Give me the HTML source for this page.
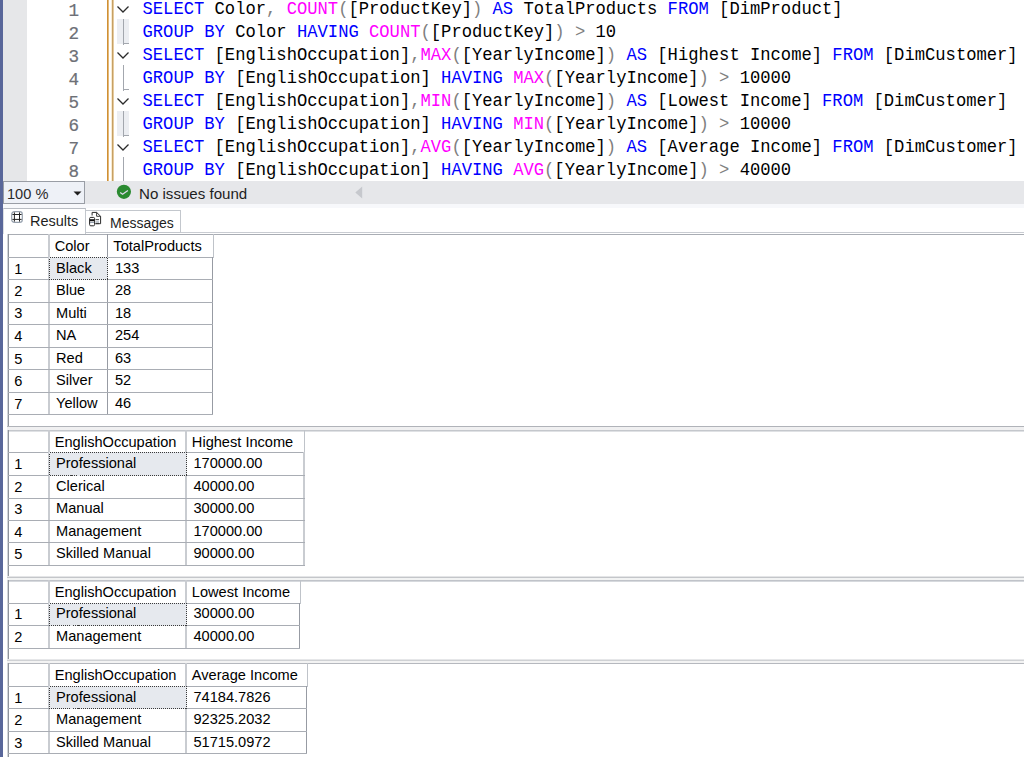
<!DOCTYPE html><html><head><meta charset="utf-8"><style>
html,body{margin:0;padding:0;width:1024px;height:757px;overflow:hidden;background:#fff;position:relative}
div,span{box-sizing:border-box}
.a{position:absolute}
.code{position:absolute;left:142.5px;font-family:"Liberation Mono",monospace;font-size:17.17px;white-space:pre;line-height:23px;height:23px;transform:scaleY(1.06);transform-origin:0 17px}
.ln{position:absolute;left:40px;width:39px;text-align:right;font-family:"Liberation Mono",monospace;font-size:17.6px;color:#6d7076;line-height:23px;height:23px;-webkit-text-stroke:0.2px currentColor;transform:scaleY(1.05);transform-origin:0 17px}
.ui{font-family:"Liberation Sans",sans-serif;color:#1e1e1e;white-space:pre}
.g{font-family:"Liberation Sans",sans-serif;font-size:14.6px;color:#000;white-space:pre;position:absolute;line-height:16px}
.hl{position:absolute;height:1px;background:#a9adb4}
.vl{position:absolute;width:1px;background:#a9adb4}
</style></head><body>

<div class="a" style="left:3px;top:0;width:24px;height:181px;background:#e6e7e9"></div>
<div class="ln" style="top:0.4px">1</div>
<div class="code" style="top:-2.5px"><span style="color:#0000ff">SELECT</span><span style="color:#000000"> Color</span><span style="color:#808080">,</span><span style="color:#000000"> </span><span style="color:#ff00ff">COUNT</span><span style="color:#808080">(</span><span style="color:#000000">[ProductKey]</span><span style="color:#808080">)</span><span style="color:#0000ff"> AS</span><span style="color:#000000"> TotalProducts</span><span style="color:#0000ff"> FROM</span><span style="color:#000000"> [DimProduct]</span></div>
<div class="ln" style="top:23.4px">2</div>
<div class="code" style="top:20.5px"><span style="color:#0000ff">GROUP BY</span><span style="color:#000000"> Color </span><span style="color:#0000ff">HAVING</span><span style="color:#000000"> </span><span style="color:#ff00ff">COUNT</span><span style="color:#808080">(</span><span style="color:#000000">[ProductKey]</span><span style="color:#808080">)</span><span style="color:#808080"> &gt; </span><span style="color:#000000">10</span></div>
<div class="ln" style="top:46.4px">3</div>
<div class="code" style="top:43.5px"><span style="color:#0000ff">SELECT</span><span style="color:#000000"> [EnglishOccupation]</span><span style="color:#808080">,</span><span style="color:#ff00ff">MAX</span><span style="color:#808080">(</span><span style="color:#000000">[YearlyIncome]</span><span style="color:#808080">)</span><span style="color:#0000ff"> AS </span><span style="color:#000000">[Highest Income]</span><span style="color:#0000ff"> FROM </span><span style="color:#000000">[DimCustomer]</span></div>
<div class="ln" style="top:69.4px">4</div>
<div class="code" style="top:66.5px"><span style="color:#0000ff">GROUP BY</span><span style="color:#000000"> [EnglishOccupation] </span><span style="color:#0000ff">HAVING</span><span style="color:#000000"> </span><span style="color:#ff00ff">MAX</span><span style="color:#808080">(</span><span style="color:#000000">[YearlyIncome]</span><span style="color:#808080">)</span><span style="color:#808080"> &gt; </span><span style="color:#000000">10000</span></div>
<div class="ln" style="top:92.4px">5</div>
<div class="code" style="top:89.5px"><span style="color:#0000ff">SELECT</span><span style="color:#000000"> [EnglishOccupation]</span><span style="color:#808080">,</span><span style="color:#ff00ff">MIN</span><span style="color:#808080">(</span><span style="color:#000000">[YearlyIncome]</span><span style="color:#808080">)</span><span style="color:#0000ff"> AS </span><span style="color:#000000">[Lowest Income]</span><span style="color:#0000ff"> FROM </span><span style="color:#000000">[DimCustomer]</span></div>
<div class="ln" style="top:115.4px">6</div>
<div class="code" style="top:112.5px"><span style="color:#0000ff">GROUP BY</span><span style="color:#000000"> [EnglishOccupation] </span><span style="color:#0000ff">HAVING</span><span style="color:#000000"> </span><span style="color:#ff00ff">MIN</span><span style="color:#808080">(</span><span style="color:#000000">[YearlyIncome]</span><span style="color:#808080">)</span><span style="color:#808080"> &gt; </span><span style="color:#000000">10000</span></div>
<div class="ln" style="top:138.4px">7</div>
<div class="code" style="top:135.5px"><span style="color:#0000ff">SELECT</span><span style="color:#000000"> [EnglishOccupation]</span><span style="color:#808080">,</span><span style="color:#ff00ff">AVG</span><span style="color:#808080">(</span><span style="color:#000000">[YearlyIncome]</span><span style="color:#808080">)</span><span style="color:#0000ff"> AS </span><span style="color:#000000">[Average Income]</span><span style="color:#0000ff"> FROM </span><span style="color:#000000">[DimCustomer]</span></div>
<div class="ln" style="top:161.4px">8</div>
<div class="code" style="top:158.5px"><span style="color:#0000ff">GROUP BY</span><span style="color:#000000"> [EnglishOccupation] </span><span style="color:#0000ff">HAVING</span><span style="color:#000000"> </span><span style="color:#ff00ff">AVG</span><span style="color:#808080">(</span><span style="color:#000000">[YearlyIncome]</span><span style="color:#808080">)</span><span style="color:#808080"> &gt; </span><span style="color:#000000">40000</span></div>
<div class="a" style="left:107px;top:0;width:1px;height:181px;background:#cf9036"></div><div class="a" style="left:108px;top:0;width:1px;height:181px;background:#e4b978"></div>
<div class="a" style="left:111px;top:0;width:1px;height:181px;background:#f8ead0"></div><div class="a" style="left:112px;top:0;width:1px;height:181px;background:#c6a064"></div><div class="a" style="left:113px;top:0;width:1px;height:181px;background:#e6cb9e"></div>
<svg class="a" style="left:116px;top:4px" width="14" height="10" viewBox="0 0 14 10"><path d="M1.5 2.5 L7 8 L12.5 2.5" fill="none" stroke="#2b2b2b" stroke-width="1.3"/></svg>
<div class="a" style="left:117px;top:19px;width:12px;height:25px;background:#eceef2"></div>
<div class="a" style="left:123px;top:19px;width:1px;height:26px;background:#a3a7ae"></div>
<div class="a" style="left:123px;top:43px;width:6px;height:1px;background:#a3a7ae"></div>
<svg class="a" style="left:116px;top:50px" width="14" height="10" viewBox="0 0 14 10"><path d="M1.5 2.5 L7 8 L12.5 2.5" fill="none" stroke="#2b2b2b" stroke-width="1.3"/></svg>
<div class="a" style="left:123px;top:65px;width:1px;height:26px;background:#a3a7ae"></div>
<div class="a" style="left:123px;top:89px;width:6px;height:1px;background:#a3a7ae"></div>
<svg class="a" style="left:116px;top:96px" width="14" height="10" viewBox="0 0 14 10"><path d="M1.5 2.5 L7 8 L12.5 2.5" fill="none" stroke="#2b2b2b" stroke-width="1.3"/></svg>
<div class="a" style="left:117px;top:111px;width:12px;height:25px;background:#eceef2"></div>
<div class="a" style="left:123px;top:111px;width:1px;height:26px;background:#a3a7ae"></div>
<div class="a" style="left:123px;top:135px;width:6px;height:1px;background:#a3a7ae"></div>
<svg class="a" style="left:116px;top:142px" width="14" height="10" viewBox="0 0 14 10"><path d="M1.5 2.5 L7 8 L12.5 2.5" fill="none" stroke="#2b2b2b" stroke-width="1.3"/></svg>
<div class="a" style="left:123px;top:157px;width:1px;height:25px;background:#a3a7ae"></div>
<div class="a" style="left:3px;top:181px;width:1021px;height:23px;background:#e6e7ea"></div>
<div class="a" style="left:3px;top:181px;width:82px;height:23px;background:#eef1f7;border:1px solid #999da5"></div>
<div class="a ui" style="left:7px;top:185.5px;font-size:14.6px;line-height:17px;color:#2a2a2a">100 %</div>
<svg class="a" style="left:73px;top:191px" width="9" height="5" viewBox="0 0 9 5"><path d="M0.5 0.5 L8.5 0.5 L4.5 4.5 Z" fill="#1e1e1e"/></svg>
<svg class="a" style="left:116px;top:184px" width="16" height="16" viewBox="0 0 16 16"><circle cx="7.9" cy="7.85" r="7.1" fill="#2a8a30"/><path d="M4.2 8.4 L6.6 10.3 L11.9 6.4" fill="none" stroke="#dcd8ea" stroke-width="1.3"/></svg>
<div class="a ui" style="left:139px;top:184.8px;font-size:15.1px;line-height:17px">No issues found</div>
<svg class="a" style="left:355px;top:186px" width="8" height="13" viewBox="0 0 8 13"><path d="M7.2 0.6 L0.3 6.5 L7.2 12.4 Z" fill="#c6c8cd"/></svg>
<div class="a" style="left:3px;top:204px;width:1021px;height:4px;background:#f7f8fb"></div>
<div class="a" style="left:86px;top:232px;width:938px;height:1px;background:#c9ccd2"></div>
<div class="a" style="left:3px;top:208px;width:83px;height:26px;background:#fff;border-top:1px solid #b9bdc4;border-right:1px solid #c3c7cd;border-left:1px solid #dcdfe3"></div>
<div class="a" style="left:85px;top:210px;width:96px;height:23px;background:#fff;border:1px solid #c3c7cd"></div>
<svg class="a" style="left:11px;top:211px" width="12" height="12" viewBox="0 0 12 12"><rect x="0.7" y="0.7" width="10.6" height="10.6" rx="2.6" fill="none" stroke="#96a0ad" stroke-width="1.2"/><path d="M3.4 1.4V10.6M8.5 1.4V10.6M1.4 3.5H10.6M1.4 8.4H10.6" stroke="#222" stroke-width="1"/></svg>
<div class="a ui" style="left:30px;top:213px;font-size:14.5px;line-height:16px">Results</div>
<svg class="a" style="left:86px;top:209px" width="18" height="18" viewBox="0 0 18 18"><path d="M6.1 6.5V3.4H10.6L14.6 7.3V14.7H9.5" fill="none" stroke="#2a2a2a" stroke-width="1"/><path d="M10.6 3.4V7.3H14.6" fill="none" stroke="#2a2a2a" stroke-width="0.9"/><rect x="3.6" y="8.4" width="5" height="8.4" rx="1.2" fill="#fff" stroke="#222" stroke-width="1"/><rect x="4" y="10.2" width="4.2" height="2" fill="#111"/><path d="M4 13.4H8.2" stroke="#8b96a6" stroke-width="1"/><path d="M9.6 10.6H13M9.6 14.6H13" stroke="#333" stroke-width="0.9"/><path d="M9.6 12.2H13M9.6 13.3H13" stroke="#a8b0ba" stroke-width="0.9"/></svg>
<div class="a ui" style="left:110px;top:215px;font-size:14px;line-height:16px">Messages</div>
<div class="hl" style="left:8px;top:234px;width:1016px"></div>
<div class="vl" style="left:7px;top:234px;height:193px;background:#d2d5d9"></div>
<div class="vl" style="left:8px;top:234px;height:193px;background:#8f949c"></div>
<div class="hl" style="left:8px;top:257px;width:206px"></div>
<div class="vl" style="left:48px;top:234px;height:181px;width:2px;background:#c9ccd1"></div>
<div class="vl" style="left:107px;top:234px;height:181px;background:#979ba3"></div>
<div class="vl" style="left:213px;top:234px;height:24px;background:#bfc3c9"></div>
<div class="vl" style="left:212px;top:257px;height:158px;background:#979ba3"></div>
<div class="hl" style="left:8px;top:279px;width:205px"></div>
<div class="hl" style="left:8px;top:302px;width:205px"></div>
<div class="hl" style="left:8px;top:324px;width:205px"></div>
<div class="hl" style="left:8px;top:347px;width:205px"></div>
<div class="hl" style="left:8px;top:369px;width:205px"></div>
<div class="hl" style="left:8px;top:392px;width:205px"></div>
<div class="hl" style="left:8px;top:414px;width:205px"></div>
<svg class="a" style="left:49px;top:257px" width="59" height="23"><rect x="0" y="0" width="59" height="23" fill="#e6e9ee"/><rect x="0.5" y="0.5" width="58" height="22" fill="none" stroke="#3a3a3a" stroke-width="1" stroke-dasharray="1 1" shape-rendering="crispEdges"/></svg>
<div class="g" style="left:54.70px;top:237.85px">Color</div>
<div class="g" style="left:113.35px;top:237.85px">TotalProducts</div>
<div class="g" style="left:14.30px;top:260.70px">1</div>
<div class="g" style="left:56.00px;top:259.85px">Black</div>
<div class="g" style="left:114.95px;top:259.85px">133</div>
<div class="g" style="left:14.30px;top:282.80px">2</div>
<div class="g" style="left:56.00px;top:281.95px">Blue</div>
<div class="g" style="left:114.95px;top:281.95px">28</div>
<div class="g" style="left:14.30px;top:305.40px">3</div>
<div class="g" style="left:56.00px;top:304.55px">Multi</div>
<div class="g" style="left:114.95px;top:304.55px">18</div>
<div class="g" style="left:14.30px;top:327.90px">4</div>
<div class="g" style="left:56.00px;top:327.05px">NA</div>
<div class="g" style="left:114.95px;top:327.05px">254</div>
<div class="g" style="left:14.30px;top:350.80px">5</div>
<div class="g" style="left:56.00px;top:349.95px">Red</div>
<div class="g" style="left:114.95px;top:349.95px">63</div>
<div class="g" style="left:14.30px;top:372.80px">6</div>
<div class="g" style="left:56.00px;top:371.95px">Silver</div>
<div class="g" style="left:114.95px;top:371.95px">52</div>
<div class="g" style="left:14.30px;top:395.70px">7</div>
<div class="g" style="left:56.00px;top:394.85px">Yellow</div>
<div class="g" style="left:114.95px;top:394.85px">46</div>
<div class="a" style="left:7px;top:426px;width:1017px;height:1px;background:#b0b3b9"></div>
<div class="a" style="left:7px;top:427px;width:1017px;height:1px;background:#f0f0f1"></div>
<div class="a" style="left:7px;top:428px;width:1017px;height:1px;background:#f0f0f1"></div>
<div class="a" style="left:7px;top:429px;width:1017px;height:1px;background:#f0f0f1"></div>
<div class="a" style="left:7px;top:430px;width:1017px;height:1px;background:#c4c7cc"></div>
<div class="a" style="left:7px;top:431px;width:1017px;height:1px;background:#dfe1e4"></div>
<div class="vl" style="left:7px;top:430px;height:148px;background:#d2d5d9"></div>
<div class="vl" style="left:8px;top:430px;height:148px;background:#8f949c"></div>
<div class="hl" style="left:8px;top:452px;width:297px"></div>
<div class="vl" style="left:48px;top:430px;height:136px;width:2px;background:#c9ccd1"></div>
<div class="vl" style="left:185px;top:430px;height:136px;width:2px;background:#c9ccd1"></div>
<div class="vl" style="left:304px;top:430px;height:23px;background:#bfc3c9"></div>
<div class="vl" style="left:303px;top:452px;height:114px;width:2px;background:#c9ccd1"></div>
<div class="hl" style="left:8px;top:475px;width:297px"></div>
<div class="hl" style="left:8px;top:498px;width:297px"></div>
<div class="hl" style="left:8px;top:520px;width:297px"></div>
<div class="hl" style="left:8px;top:542px;width:297px"></div>
<div class="hl" style="left:8px;top:565px;width:297px"></div>
<svg class="a" style="left:49px;top:452px" width="138" height="24"><rect x="0" y="0" width="138" height="24" fill="#e6e9ee"/><rect x="0.5" y="0.5" width="137" height="23" fill="none" stroke="#3a3a3a" stroke-width="1" stroke-dasharray="1 1" shape-rendering="crispEdges"/></svg>
<div class="g" style="left:54.70px;top:433.95px">EnglishOccupation</div>
<div class="g" style="left:191.85px;top:433.95px">Highest Income</div>
<div class="g" style="left:14.30px;top:455.90px">1</div>
<div class="g" style="left:56.00px;top:455.05px">Professional</div>
<div class="g" style="left:193.45px;top:455.05px">170000.00</div>
<div class="g" style="left:14.30px;top:478.80px">2</div>
<div class="g" style="left:56.00px;top:477.95px">Clerical</div>
<div class="g" style="left:193.45px;top:477.95px">40000.00</div>
<div class="g" style="left:14.30px;top:501.20px">3</div>
<div class="g" style="left:56.00px;top:500.35px">Manual</div>
<div class="g" style="left:193.45px;top:500.35px">30000.00</div>
<div class="g" style="left:14.30px;top:523.70px">4</div>
<div class="g" style="left:56.00px;top:522.85px">Management</div>
<div class="g" style="left:193.45px;top:522.85px">170000.00</div>
<div class="g" style="left:14.30px;top:545.90px">5</div>
<div class="g" style="left:56.00px;top:545.05px">Skilled Manual</div>
<div class="g" style="left:193.45px;top:545.05px">90000.00</div>
<div class="a" style="left:7px;top:576px;width:1017px;height:1px;background:#e4e5e7"></div>
<div class="a" style="left:7px;top:577px;width:1017px;height:1px;background:#c4c6ca"></div>
<div class="a" style="left:7px;top:578px;width:1017px;height:1px;background:#f2f3f3"></div>
<div class="a" style="left:7px;top:579px;width:1017px;height:1px;background:#f2f3f3"></div>
<div class="a" style="left:7px;top:580px;width:1017px;height:1px;background:#c0c3c9"></div>
<div class="a" style="left:7px;top:581px;width:1017px;height:1px;background:#d6d9dd"></div>
<div class="vl" style="left:7px;top:580px;height:81px;background:#d2d5d9"></div>
<div class="vl" style="left:8px;top:580px;height:81px;background:#8f949c"></div>
<div class="hl" style="left:8px;top:603px;width:293px"></div>
<div class="vl" style="left:48px;top:580px;height:69px;width:2px;background:#c9ccd1"></div>
<div class="vl" style="left:185px;top:580px;height:69px;width:2px;background:#c9ccd1"></div>
<div class="vl" style="left:300px;top:580px;height:24px;background:#bfc3c9"></div>
<div class="vl" style="left:299px;top:603px;height:46px;background:#979ba3"></div>
<div class="hl" style="left:8px;top:625px;width:292px"></div>
<div class="hl" style="left:8px;top:648px;width:292px"></div>
<svg class="a" style="left:49px;top:603px" width="138" height="23"><rect x="0" y="0" width="138" height="23" fill="#e6e9ee"/><rect x="0.5" y="0.5" width="137" height="22" fill="none" stroke="#3a3a3a" stroke-width="1" stroke-dasharray="1 1" shape-rendering="crispEdges"/></svg>
<div class="g" style="left:54.70px;top:583.95px">EnglishOccupation</div>
<div class="g" style="left:191.85px;top:583.95px">Lowest Income</div>
<div class="g" style="left:14.30px;top:606.20px">1</div>
<div class="g" style="left:56.00px;top:605.35px">Professional</div>
<div class="g" style="left:193.45px;top:605.35px">30000.00</div>
<div class="g" style="left:14.30px;top:628.70px">2</div>
<div class="g" style="left:56.00px;top:627.85px">Management</div>
<div class="g" style="left:193.45px;top:627.85px">40000.00</div>
<div class="a" style="left:7px;top:659px;width:1017px;height:1px;background:#e6e7e9"></div>
<div class="a" style="left:7px;top:660px;width:1017px;height:1px;background:#cfd1d4"></div>
<div class="a" style="left:7px;top:661px;width:1017px;height:1px;background:#f3f3f3"></div>
<div class="a" style="left:7px;top:662px;width:1017px;height:1px;background:#f3f3f3"></div>
<div class="a" style="left:7px;top:663px;width:1017px;height:1px;background:#b5b8be"></div>
<div class="vl" style="left:7px;top:663px;height:95px;background:#d2d5d9"></div>
<div class="vl" style="left:8px;top:663px;height:95px;background:#8f949c"></div>
<div class="hl" style="left:8px;top:686px;width:300px"></div>
<div class="vl" style="left:48px;top:663px;height:91px;width:2px;background:#c9ccd1"></div>
<div class="vl" style="left:185px;top:663px;height:91px;width:2px;background:#c9ccd1"></div>
<div class="vl" style="left:307px;top:663px;height:24px;background:#bfc3c9"></div>
<div class="vl" style="left:306px;top:686px;height:68px;background:#979ba3"></div>
<div class="hl" style="left:8px;top:708px;width:299px"></div>
<div class="hl" style="left:8px;top:731px;width:299px"></div>
<div class="hl" style="left:8px;top:753px;width:299px"></div>
<svg class="a" style="left:49px;top:686px" width="138" height="23"><rect x="0" y="0" width="138" height="23" fill="#e6e9ee"/><rect x="0.5" y="0.5" width="137" height="22" fill="none" stroke="#3a3a3a" stroke-width="1" stroke-dasharray="1 1" shape-rendering="crispEdges"/></svg>
<div class="g" style="left:54.70px;top:666.95px">EnglishOccupation</div>
<div class="g" style="left:191.85px;top:666.95px">Average Income</div>
<div class="g" style="left:14.30px;top:689.70px">1</div>
<div class="g" style="left:56.00px;top:688.85px">Professional</div>
<div class="g" style="left:193.45px;top:688.85px">74184.7826</div>
<div class="g" style="left:14.30px;top:711.70px">2</div>
<div class="g" style="left:56.00px;top:710.85px">Management</div>
<div class="g" style="left:193.45px;top:710.85px">92325.2032</div>
<div class="g" style="left:14.30px;top:734.70px">3</div>
<div class="g" style="left:56.00px;top:733.85px">Skilled Manual</div>
<div class="g" style="left:193.45px;top:733.85px">51715.0972</div>
<div class="a" style="left:0;top:0;width:3px;height:757px;background:#59679a"></div>
</body></html>
